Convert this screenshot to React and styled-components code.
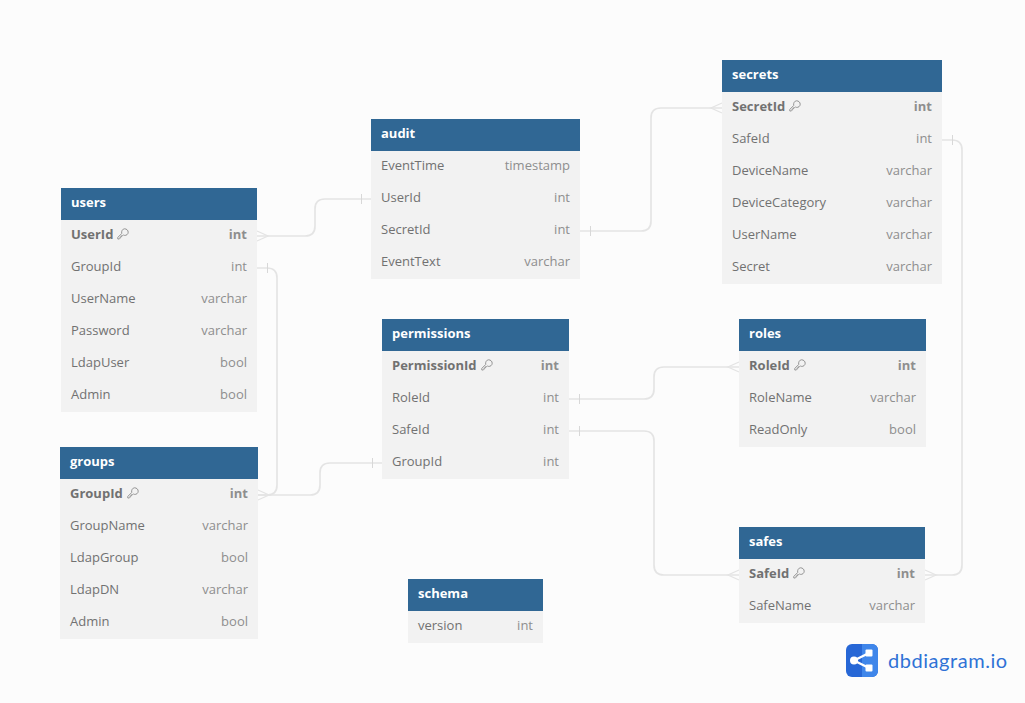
import React from "react";
import styled, { createGlobalStyle } from "styled-components";

const GlobalStyle = createGlobalStyle`
  html, body {
    margin: 0;
    padding: 0;
    background: #fcfcfc;
    font-family: "Open Sans", "Noto Sans", sans-serif;
  }
`;

const Canvas = styled.div`
  position: relative;
  width: 1025px;
  height: 703px;
  overflow: hidden;
  background: #fcfcfc;
`;

const Lines = styled.svg`
  position: absolute;
  left: 0;
  top: 0;
  fill: none;
  stroke: #e4e4e4;
  stroke-width: 1.7;
`;

const Table = styled.div`
  position: absolute;
  left: ${({ $x }) => $x}px;
  top: ${({ $y }) => $y}px;
  width: ${({ $w }) => $w}px;
  background: #f2f2f2;
`;

const Header = styled.div`
  height: 32px;
  box-sizing: border-box;
  padding: 0 10px 5px;
  display: flex;
  align-items: center;
  background: #306794;
  color: #fff;
  font-size: 13px;
  font-weight: 700;
`;

const Row = styled.div`
  height: 32px;
  box-sizing: border-box;
  padding: 0 10px 5px;
  display: flex;
  align-items: center;
  justify-content: space-between;
  font-size: 13px;
  font-weight: ${({ $pk }) => ($pk ? 700 : 400)};
`;

const FieldName = styled.span`
  display: flex;
  align-items: center;
  gap: 4px;
  color: #717171;
`;

const FieldType = styled.span`
  color: #8e8e8e;
`;

const Brand = styled.div`
  position: absolute;
  left: 846px;
  top: 644px;
  display: flex;
  align-items: center;
  gap: 10px;
`;

const BrandText = styled.span`
  font-family: "Lato", sans-serif;
  font-size: 20px;
  letter-spacing: 0.55px;
  color: #2f72d6;
  margin-top: -2px;
`;

const KeySvg = styled.svg`
  fill: none;
  stroke: #8a8a8a;
  stroke-width: 0.9;
  stroke-linejoin: round;
`;

const tables = [
  { name: "users", x: 61, y: 188, w: 196, fields: [["UserId", "int", true], ["GroupId", "int"], ["UserName", "varchar"], ["Password", "varchar"], ["LdapUser", "bool"], ["Admin", "bool"]] },
  { name: "audit", x: 371, y: 119, w: 209, fields: [["EventTime", "timestamp"], ["UserId", "int"], ["SecretId", "int"], ["EventText", "varchar"]] },
  { name: "secrets", x: 722, y: 60, w: 220, fields: [["SecretId", "int", true], ["SafeId", "int"], ["DeviceName", "varchar"], ["DeviceCategory", "varchar"], ["UserName", "varchar"], ["Secret", "varchar"]] },
  { name: "permissions", x: 382, y: 319, w: 187, fields: [["PermissionId", "int", true], ["RoleId", "int"], ["SafeId", "int"], ["GroupId", "int"]] },
  { name: "roles", x: 739, y: 319, w: 187, fields: [["RoleId", "int", true], ["RoleName", "varchar"], ["ReadOnly", "bool"]] },
  { name: "groups", x: 60, y: 447, w: 198, fields: [["GroupId", "int", true], ["GroupName", "varchar"], ["LdapGroup", "bool"], ["LdapDN", "varchar"], ["Admin", "bool"]] },
  { name: "safes", x: 739, y: 527, w: 186, fields: [["SafeId", "int", true], ["SafeName", "varchar"]] },
  { name: "schema", x: 408, y: 579, w: 135, fields: [["version", "int"]] },
];

const links = [
  "M257 236 H305 Q315 236 315 226 V209 Q315 199 325 199 H371",
  "M258 495 H267 Q277 495 277 485 V278 Q277 268 267 268 H257",
  "M258 495 H310 Q320 495 320 485 V473 Q320 463 330 463 H382",
  "M580 231 H641 Q651 231 651 221 V118 Q651 108 661 108 H722",
  "M942 140 H952 Q962 140 962 150 V565 Q962 575 952 575 H925",
  "M569 399 H644 Q654 399 654 389 V377 Q654 367 664 367 H740",
  "M569 431 H644 Q654 431 654 441 V565 Q654 575 664 575 H739",
];

// crow's foot: [table edge x, y, direction away from the table]
const manyEnds = [[257, 236, 1], [258, 495, 1], [722, 108, -1], [925, 575, 1], [739, 367, -1], [739, 575, -1]];
const oneEnds = [[361, 199], [267, 268], [372, 463], [590, 231], [952, 140], [579, 399], [579, 431]];

function Connections() {
  return (
    <Lines width="1025" height="703">
      {links.map((d) => (
        <path key={d} d={d} />
      ))}
      {manyEnds.map(([x, y, dir]) => (
        <path key={`${x}-${y}`} strokeWidth="1.3" d={`M${x} ${y - 5} L${x + dir * 11} ${y} L${x} ${y + 5}`} />
      ))}
      {oneEnds.map(([x, y]) => (
        <path key={`${x}-${y}`} strokeWidth="1" stroke="#d8d8d8" d={`M${x + 0.5} ${y - 5} V${y + 5}`} />
      ))}
    </Lines>
  );
}

function KeyIcon() {
  return (
    <KeySvg width="12" height="12" viewBox="0 0 12 12">
      <path d="M7.6 .8C9.6 .8 11.2 2.4 11.2 4.2C11.2 6.2 9.4 7.6 7.4 7.4L6.4 6.9L5.5 7.8H4.3V9H3.1V10.2L2.3 11H.8V9.4L4.7 5.5C4.2 3.1 5.6 .8 7.6 .8Z" />
    </KeySvg>
  );
}

function DbTable({ table }) {
  return (
    <Table $x={table.x} $y={table.y} $w={table.w}>
      <Header>{table.name}</Header>
      {table.fields.map(([name, type, pk]) => (
        <Row key={name} $pk={pk}>
          <FieldName>
            {name}
            {pk && <KeyIcon />}
          </FieldName>
          <FieldType>{type}</FieldType>
        </Row>
      ))}
    </Table>
  );
}

function Logo() {
  return (
    <svg width="32" height="33" viewBox="0 0 32 33">
      <rect width="32" height="33" rx="6" fill="#2767d6" />
      <path d="M16 0H26a6 6 0 0 1 6 6V27a6 6 0 0 1-6 6H16Z" fill="#3f86ea" />
      <path d="M8 16.5 L23 9 M8 16.5 L23 24" stroke="#fff" strokeWidth="2.4" />
      <circle cx="8" cy="16.5" r="4" fill="#fff" />
      <rect x="19.5" y="5.5" width="7" height="7" rx="1" fill="#fff" />
      <rect x="19.5" y="20.5" width="7" height="7" rx="1" fill="#fff" />
    </svg>
  );
}

export default function App() {
  return (
    <Canvas>
      <GlobalStyle />
      <Connections />
      {tables.map((t) => (
        <DbTable key={t.name} table={t} />
      ))}
      <Brand>
        <Logo />
        <BrandText>dbdiagram.io</BrandText>
      </Brand>
    </Canvas>
  );
}
